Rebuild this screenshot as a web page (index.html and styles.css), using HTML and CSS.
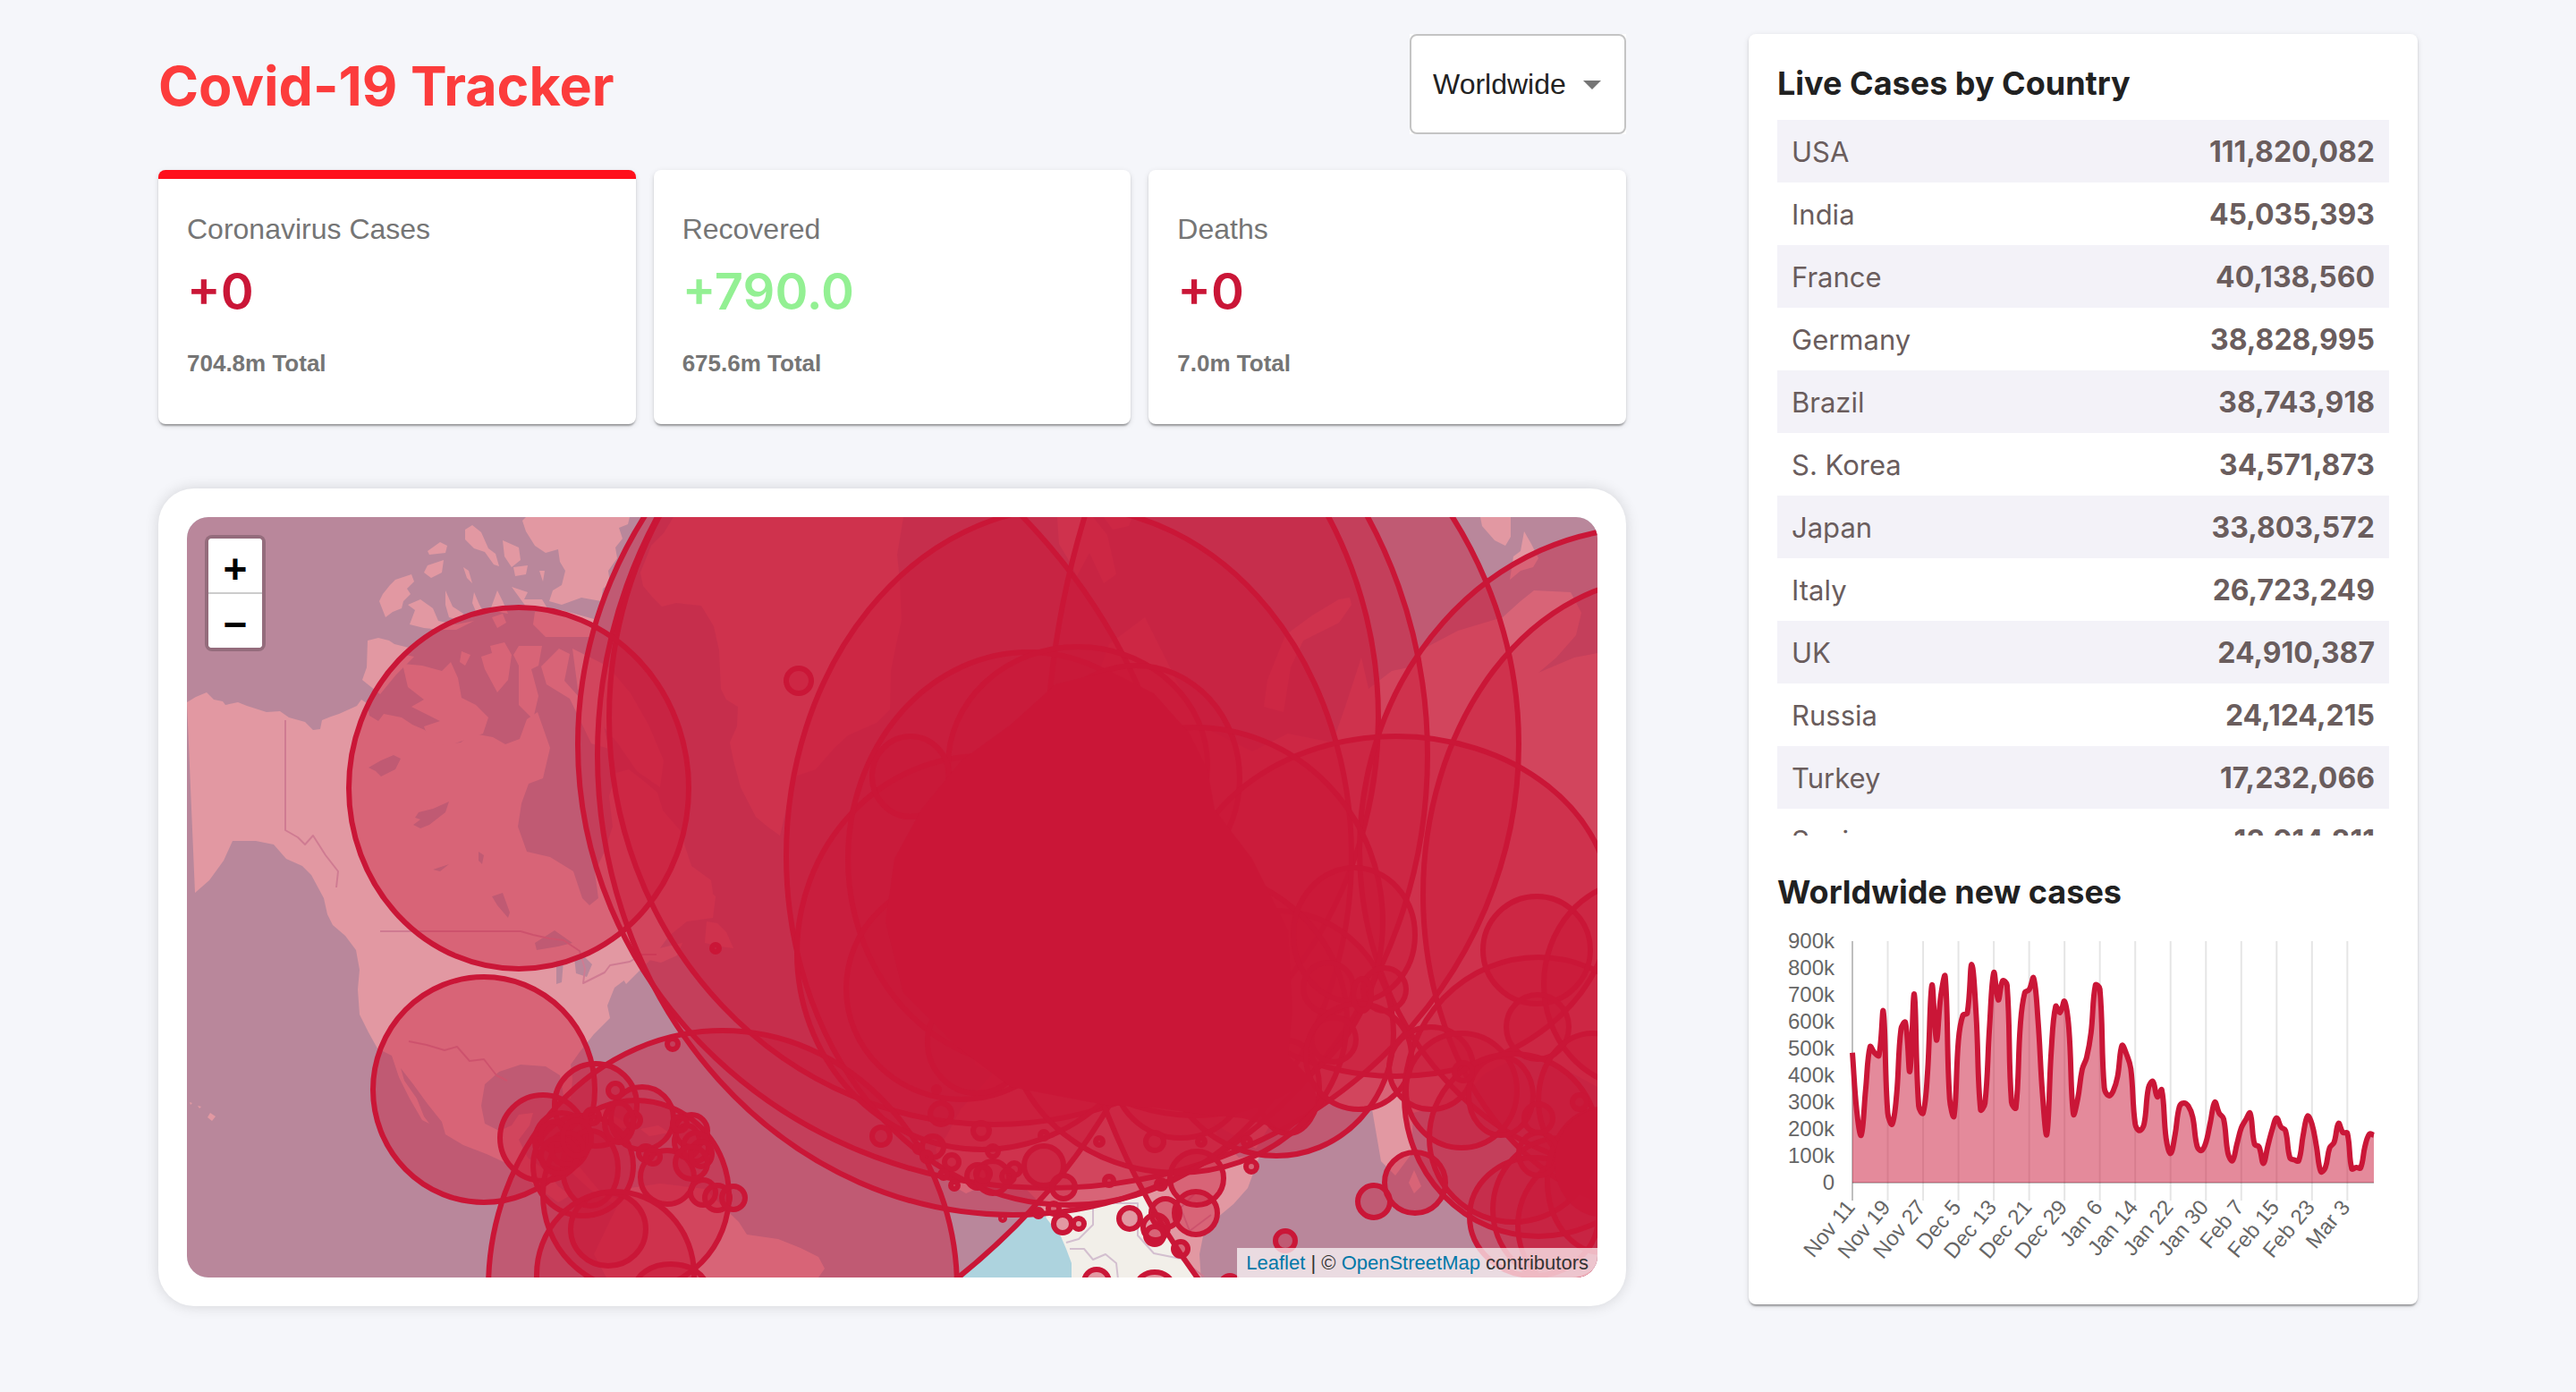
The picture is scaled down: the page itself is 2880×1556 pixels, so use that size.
FILE: index.html
```html
<!DOCTYPE html>
<html lang="en">
<head>
<meta charset="utf-8">
<meta name="viewport" content="width=device-width, initial-scale=1">
<title>Covid-19 Tracker</title>
<link rel="stylesheet" href="styles.css">
</head>
<body>
<div class="app">
  <main class="app-left">
    <header class="app-header">
      <h1 class="app-title">Covid-19 Tracker</h1>
      <div class="country-picker">
        <select class="country-select" aria-label="Country">
          <option>Worldwide</option>
          <option>USA</option>
          <option>India</option>
          <option>France</option>
        </select>
        <svg class="country-arrow" viewBox="0 0 20 10" aria-hidden="true"><path d="M0 0h20L10 10z"/></svg>
      </div>
    </header>

    <section class="stats">
      <article class="card stat stat-selected">
        <p class="stat-title">Coronavirus Cases</p>
        <h2 class="stat-cases">+0</h2>
        <p class="stat-total">704.8m Total</p>
      </article>
      <article class="card stat">
        <p class="stat-title">Recovered</p>
        <h2 class="stat-cases stat-green">+790.0</h2>
        <p class="stat-total">675.6m Total</p>
      </article>
      <article class="card stat">
        <p class="stat-title">Deaths</p>
        <h2 class="stat-cases">+0</h2>
        <p class="stat-total">7.0m Total</p>
      </article>
    </section>

    <section class="map-card">
      <div class="map">
        <svg class="map-canvas" viewBox="209 578 1577 850" preserveAspectRatio="xMidYMid slice" role="img" aria-label="World map of cases">
          <rect class="ocean" x="209" y="578" width="1577" height="850"/>
          <g class="land">
            <!-- North America -->
            <path d="M209 785l10-6 12-5 8 8 10 2 3 4 14-3 10 4 22 7 15-1 10 7 18 5 9 9 8-1 2-10 10-4 9-3 20-9 5-7 6 4 3 14 10 6 6-8 20 4 12 8 14 6 10 12 10 4 20-2 14-10 22 4 14 8 16-6 8-22 12-8 14 40-8 34-16 6-8 22-4 26 10 28 26 6 26 16 10 30 8 8 10-8-4-30 10-20 10-30-4-34 8-26 14-4 18 14 14 12 8 26 20 26 10 30 22 16 2 14-10 16-30 4-18 18-12 16 10 8 26-6-6 14-18 8-18-4-18 20-16 12-8 20 3 14-18 18-16 20-10 14 2 16-2 22-8-4-4-22-16-10-28-2-24 8-16 14-4 24 4 20 16 8 14-6 8-12 16-2-4 14-12 16 10 20 20 14 14 18 14 10-14 8-30-22-24-20-26-12-26-10-20-12-4-14-16-20-16-22-14-18 4 14 14 20 8 20 6 8-8-4-14-24-12-24-8-24-16-8-10-18-10-20-2-28 2-22-4-22-12-16-14-12-6-12-4-18-14-26-10-10-18-8-14-16-20-4-26 0-10 22-16 22-16 14z"/>
            <path d="M684 905L700 885 722 890 740 905 762 930 772 978 800 1002 797 1026 768 1030 748 1046 732 1068 700 1100 676 1060 674 1010 690 960z"/>
            <path d="M640 725L680 745 705 775 725 810 742 850 738 880 712 862 690 830 664 800 646 770z"/>
            <path d="M790 1030l12 2 10 10 8 18-14-2-18-4z"/>
            <!-- Arctic islands -->
            <path d="M411 716l12-3 12 3 6 4 16 4-4 8 10 2-20 20-18 22-20-16 5-14z"/>
            <path d="M424 672l4-8 8-10 6-6 12-4 6-2 3 8-8 8 4 6-8 8-2 8-10 4-8 6z"/>
            <path d="M478 616l14-10 8 4-2 8-18 2zM478 632l18-6-2 14-12 6-8-6zM520 592l8-5 10 8 8 18 8 6 4 14-6-2-10-14-12-4-10-10zM562 604l18 8 2 14-10 8-8-12zM574 634l16-2-2 10-12 2zM518 634l6 4 4 14-6-6zM603 638l6 0-2 12z"/>
            <path d="M576 578h128l-2 8-10 4 4 12-8 10 2 12-10 14 2 14-8 6-2 14-22-4-22 8-14-4 4-12 10-6 4-16-6-10-2-14-14 4-12-8-10-16-4-12 6-6z"/>
            <path d="M572 656l18 6-4 8 20 0 6 10-24-2zM556 660l6 12 6 14-20-4zM530 662l6 14 6 10-8 2-6-14zM498 660l8 18 12 8-2 8-14-4-4-14zM456 676l14-6 14 10 6 14 20 4 20-4-20 10-16 0-20-2-16-4 6-16z"/>
            <path d="M450 742l22 2 22 6 10-10 8 18 4 22 16 8 14 14-6 18-40 14-20-6-6-16 18-6-32-16 14-8-18-14zM516 728l10 4-6 12-6-4zM548 722l16-4 8 14-4 28-12 14-14-26-4-14 12-4zM580 722h26l-4 22-8 4 8 30-6 26-16-16 0-44-6-12zM550 690l12-4 4 10-10 6zM598 684l30-2 36 10-4 20-50 0-14-14zM625 725l12 6-6 30 18 20 14-8 10 30 8 34-20-6-24-50-26-16-6-20z"/>
            <!-- Greenland -->
            <path d="M753 578L742 596 728 610 716 640 719 655 730 668 740 678 756 674 784 677 798 700 804 727 806 770 812 782 825 790 824 812 816 830 820 850 828 880 845 913 858 924 872 934 880 900 891 867 912 860 932 837 948 822 980 808 995 793 996 750 1002 720 1008 693 1006 650 1003 620 1010 578z"/>
            <!-- South America -->
            <path d="M640 1295l30 36 22 10 6-12 40-6 50 6 38 37 9 14 35 5 25 10 20 10 7 13-7 10H678l-14-26 26-54-30-18-26-24z"/>
            <path d="M648 1248l26-8 24 14 10 8-20-2zM716 1262l20-4 12 8-22 4z"/>
            <!-- Africa -->
            <path d="M1110 1200l-36 40-16 30-12 14 6 24 14 18 14 8 18-8 32 0 16 2 12 12 8 12 4 10 16 20 6 14 6 16v20h145l-2-30 4-20 10-16 24-20 16-18 14-38-24 4-24-24-20-70z"/>
            <!-- Europe and Asia -->
            <path d="M1090 1190L1100 1100 1160 940 1240 720 1280 690 1340 810 1400 840 1440 820 1490 830 1504 790 1522 735 1530 770 1556 750 1580 745 1592 725 1630 705 1680 690 1700 672 1715 660 1756 662 1768 685 1762 710 1740 735 1720 752 1760 735 1786 730V1215L1740 1190 1700 1180 1660 1200 1632 1230 1580 1244 1578 1290 1560 1314 1544 1298 1534 1240 1494 1234 1454 1214 1434 1234 1404 1284 1304 1224 1264 1184 1164 1224z"/>
            <path d="M1413 790l4-30 20-50 30-22 30-18 12-2 2 8-14 20-40 20-14 30-8 50z"/>
            <path d="M1182 578h40l16 20 10 44-14 10-16-34-14 26-8-16-12-20zM1234 578h32l-4 10-18 4z"/>
            <path d="M1655 578h34v22l-6 10-12-6-14-16zM1704 594l8 14 8 16-6 10-14 4-12 10 4-26 8-6zM1575 1322l6-14 8 18-8 8z"/>
            <path d="M235 1244l6 4-4 5-5-4zM212 1232l3 1-2 2zM221 1236l4 1-2 2z"/>
          </g>
          <g class="water">
            <path d="M412 858l14-8 14-6 8 4-6 12-16 8-6-6zM464 914l4-6 16-4 18-8-4 12-18 14-10 4-8-4 8-6zM598 1054l22-14 20 14-16 4-24 4zM622 1074l8 0-2 24-6 2zM642 1070l12 0 8 8-6 14-12-4zM550 1002l12-4 8 22-2 6-12-14zM484 972l18-6-10 8zM535 952l6 4-2 10-4-4z"/>
          </g>
          <g class="border">
            <path d="M319 805V928l14 8 8 8 9-10 14 22 14 18-2 18M425 1041H582l14 4 18 4 16 2 18 12 6 20-2 16 24-12 6-8 22-4 14-8h16M457 1164l20 4 20 6 14-4 14 16 16-2 14 18 12 6"/>
            <path d="M1222 1345v24l-16 16-14 4M1196 1396h16l10 12 14-6 12 10 2 18M1222 1345h50v36l18 20 30 6 26 20M1340 1330l-20 20 10 26 24-18"/>
          </g>
          <g class="outbreaks" id="outbreaks"></g>
        </svg>
        <div class="zoom-control">
          <button class="zoom-button zoom-in" type="button" aria-label="Zoom in">+</button>
          <button class="zoom-button" type="button" aria-label="Zoom out">−</button>
        </div>
        <div class="attribution"><a href="#leaflet">Leaflet</a> | © <a href="#osm">OpenStreetMap</a> contributors</div>
      </div>
    </section>
  </main>

  <aside class="card app-right">
    <h3 class="side-title">Live Cases by Country</h3>
    <div class="table-scroll">
      <table class="country-table">
        <tbody>
          <tr><td>USA</td><td>111,820,082</td></tr>
          <tr><td>India</td><td>45,035,393</td></tr>
          <tr><td>France</td><td>40,138,560</td></tr>
          <tr><td>Germany</td><td>38,828,995</td></tr>
          <tr><td>Brazil</td><td>38,743,918</td></tr>
          <tr><td>S. Korea</td><td>34,571,873</td></tr>
          <tr><td>Japan</td><td>33,803,572</td></tr>
          <tr><td>Italy</td><td>26,723,249</td></tr>
          <tr><td>UK</td><td>24,910,387</td></tr>
          <tr><td>Russia</td><td>24,124,215</td></tr>
          <tr><td>Turkey</td><td>17,232,066</td></tr>
          <tr><td>Spain</td><td>13,914,811</td></tr>
        </tbody>
      </table>
    </div>
    <h3 class="side-title chart-title">Worldwide new cases</h3>
    <svg class="chart" id="chart" viewBox="0 0 684 370" role="img" aria-label="Worldwide new cases per day"></svg>
  </aside>
</div>
<script src="app.js"></script>
</body>
</html>
```
FILE: styles.css
```css
* {
  box-sizing: border-box;
  margin: 0;
}

body {
  background: #f5f6fa;
  color: #212121;
  font-family: Inter, sans-serif;
}

.app {
  display: grid;
  grid-template-columns: minmax(0, 1641fr) minmax(0, 748fr);
  align-items: start;
  gap: 137px;
  padding: 38px 177px;
}

.card {
  background: #fff;
  border-radius: 8px;
  box-shadow: 0 4px 2px -2px rgba(0, 0, 0, 0.2), 0 2px 2px rgba(0, 0, 0, 0.14), 0 2px 6px rgba(0, 0, 0, 0.12);
}

/* Header */

.app-header {
  display: flex;
  align-items: center;
  justify-content: space-between;
  margin-bottom: 40px;
}

.app-title {
  padding-top: 4px;
  color: #fc3c3c;
  font-size: 61px;
  font-weight: 700;
  line-height: 80px;
}

.country-picker {
  position: relative;
  background: #fff;
}

.country-select {
  display: block;
  width: 242px;
  height: 112px;
  padding: 0 60px 0 24px;
  appearance: none;
  background: transparent;
  border: 2px solid #c4c4c4;
  border-radius: 8px;
  color: #212121;
  font-family: "Liberation Sans", sans-serif;
  font-size: 32px;
}

.country-arrow {
  position: absolute;
  top: 52px;
  right: 28px;
  width: 20px;
  height: 10px;
  fill: #757575;
  pointer-events: none;
}

/* Stat cards */

.stats {
  display: grid;
  grid-template-columns: repeat(3, minmax(0, 1fr));
  gap: 20px;
  margin-bottom: 72px;
}

.stat {
  padding: 32px 32px 48px;
  border-top: 10px solid transparent;
}

.stat-selected {
  border-top-color: #ff0f1b;
}

.stat-title {
  color: #757575;
  font-family: "Liberation Sans", sans-serif;
  font-size: 32px;
  line-height: 48px;
}

.stat-cases {
  margin-top: 16px;
  color: #ca1637;
  font-size: 56px;
  font-weight: 600;
  line-height: 60px;
}

.stat-green {
  color: #93f093;
}

.stat-total {
  margin-top: 30px;
  color: #757575;
  font-family: "Liberation Sans", sans-serif;
  font-size: 26px;
  font-weight: 700;
  line-height: 40px;
}

/* Map */

.map-card {
  padding: 32px;
  background: #fff;
  border-radius: 40px;
  box-shadow: 0 0 16px rgba(0, 0, 0, 0.14);
}

.map {
  position: relative;
  overflow: hidden;
  border-radius: 24px;
}

.map-canvas {
  display: block;
  width: 100%;
  aspect-ratio: 1577 / 850;
}

.ocean,
.water {
  fill: #add3de;
}

.land {
  fill: #f2efe9;
}

.border {
  fill: none;
  stroke: #d3bfcf;
  stroke-width: 2;
  stroke-linejoin: round;
}

.outbreaks {
  fill: #ca1637;
  fill-opacity: 0.4;
  stroke: #ca1637;
  stroke-width: 6;
}

.dense {
  fill-opacity: 0.9;
  stroke: none;
}

.zoom-control {
  position: absolute;
  top: 20px;
  left: 20px;
  overflow: hidden;
  width: 68px;
  background: #fff;
  background-clip: padding-box;
  border: 4px solid rgba(0, 0, 0, 0.2);
  border-radius: 8px;
}

.zoom-button {
  display: block;
  width: 60px;
  height: 60px;
  padding: 4px 0 0;
  background: #fff;
  border: 0;
  color: #000;
  font-family: "Liberation Sans", sans-serif;
  font-size: 46px;
  font-weight: 700;
  line-height: 60px;
}

.zoom-in {
  height: 62px;
  border-bottom: 2px solid #ccc;
}

.attribution {
  position: absolute;
  right: 0;
  bottom: 0;
  padding: 0 10px;
  background: rgba(255, 255, 255, 0.7);
  color: #333;
  font-family: "Liberation Sans", sans-serif;
  font-size: 22px;
  line-height: 33px;
}

.attribution a {
  color: #0078a8;
  text-decoration: none;
}

/* Side panel */

.app-right {
  padding: 32px 32px 48px;
}

.side-title {
  font-size: 36px;
  font-weight: 700;
  line-height: 46px;
}

.table-scroll {
  height: 800px;
  margin-top: 18px;
  overflow-y: auto;
  scrollbar-width: none;
}

.country-table {
  width: 100%;
  border-collapse: collapse;
  color: #6a5d5d;
  font-size: 31px;
}

.country-table tr:nth-child(odd) {
  background: #f3f2f8;
}

.country-table td {
  height: 70px;
  padding: 0 16px;
}

.country-table td:last-child {
  font-size: 32px;
  font-weight: 700;
  text-align: right;
}

.chart-title {
  margin-top: 40px;
}

.chart {
  display: block;
  width: 100%;
  margin-top: 20px;
}

.chart-label {
  fill: #666;
  font-family: "Liberation Sans", sans-serif;
  font-size: 24px;
  text-anchor: end;
}

.chart-grid {
  stroke: rgba(0, 0, 0, 0.1);
  stroke-width: 2;
}

.chart-axis {
  stroke: rgba(0, 0, 0, 0.25);
  stroke-width: 2;
}

.chart-area {
  fill: #ca1637;
  fill-opacity: 0.5;
}

.chart-line {
  fill: none;
  stroke: #ca1637;
  stroke-width: 6;
  stroke-linejoin: round;
}
```
FILE: app.js
```js
const SVG = "http://www.w3.org/2000/svg";

function add(parent, name, attrs, text) {
  const node = document.createElementNS(SVG, name);
  for (const key in attrs) node.setAttribute(key, attrs[key]);
  if (text) node.textContent = text;
  parent.appendChild(node);
}

// Outbreak markers: centre x, centre y, radius x, radius y.
const outbreaks = [
  [1172, 832, 526, 496], [1132, 844, 464, 514],
  [1111, 802, 430, 455], [1195, 957, 316, 390], [315, 970, 1000, 700], [1769, 875, 600, 794],
  [580, 881, 190, 202], [541, 1218, 124, 126],
  [808, 1440, 262, 288], [1098, 1065, 207, 220], [1150, 960, 202, 231], [1205, 855, 145, 132],
  [1270, 870, 116, 126], [1840, 950, 320, 360], [1860, 1000, 269, 354], [1561, 1013, 240, 190],
  [1720, 1226, 150, 156], [1427, 1155, 131, 137], [1335, 1030, 211, 217], [1075, 1105, 129, 124],
  [1092, 1165, 55, 57], [1320, 1200, 75, 72], [1440, 1215, 35, 52], [1316, 1140, 190, 171],
  [1018, 868, 43, 45], [1718, 1062, 60, 60], [1830, 1100, 104, 115], [1719, 1148, 35, 36],
  [1514, 1045, 68, 75], [1485, 1104, 28, 28], [1491, 1162, 25, 25], [1548, 1106, 24, 24],
  [1519, 1181, 59, 59], [1600, 1194, 47, 46], [1634, 1219, 62, 64], [1678, 1225, 36, 44],
  [1692, 1272, 94, 94], [1582, 1322, 34, 34], [1536, 1343, 18, 18], [1437, 1387, 11, 11],
  [1399, 1304, 6, 6], [1291, 1276, 10, 10], [1338, 1317, 30, 30], [1337, 1356, 24, 24],
  [1303, 1356, 16, 16], [1292, 1372, 14, 14], [1291, 1381, 10, 10], [1263, 1362, 12, 12],
  [1320, 1396, 8, 8], [1291, 1438, 20, 16], [1226, 1433, 14, 14], [1375, 1436, 10, 10],
  [1715, 1360, 72, 66], [1745, 1352, 76, 80], [1775, 1370, 78, 80], [1780, 1230, 60, 75],
  [1790, 1320, 60, 80], [1720, 1290, 22, 24], [1720, 1250, 16, 16], [1766, 1232, 8, 8],
  [1636, 1198, 10, 10], [1523, 1112, 10, 18],
  [666, 1235, 46, 46], [607, 1272, 48, 48], [628, 1276, 30, 32], [652, 1303, 56, 56],
  [660, 1306, 31, 42], [718, 1250, 35, 35], [711, 1336, 104, 106], [746, 1316, 30, 30],
  [680, 1374, 42, 41], [688, 1425, 88, 93], [750, 1440, 40, 27], [786, 1333, 14, 14],
  [802, 1339, 14, 14], [820, 1339, 13, 13], [773, 1264, 18, 18], [768, 1276, 14, 18],
  [778, 1282, 14, 16], [784, 1290, 12, 14], [773, 1300, 18, 18], [760, 1256, 8, 8],
  [688, 1219, 8, 8], [708, 1252, 8, 8], [662, 1248, 8, 8], [722, 1289, 8, 8],
  [730, 1293, 8, 8], [620, 1270, 16, 16], [634, 1284, 18, 18], [625, 1292, 20, 20],
  [645, 1272, 16, 20], [692, 1255, 16, 22], [800, 1060, 4, 4],
  [752, 1167, 6, 6], [985, 1270, 10, 10], [893, 761, 14, 14], [1052, 1245, 12, 12],
  [1097, 1264, 9, 9], [1047, 1218, 3, 3], [1043, 1282, 12, 12], [1027, 1284, 4, 4],
  [1036, 1293, 5, 5], [1064, 1299, 8, 8], [1055, 1313, 4, 4], [1067, 1325, 4, 4],
  [1093, 1315, 12, 13], [1110, 1316, 18, 18], [1099, 1312, 8, 8], [1110, 1287, 6, 6],
  [1134, 1307, 7, 7], [1127, 1315, 7, 7], [1167, 1303, 22, 22], [1167, 1269, 4, 4],
  [1229, 1276, 4, 4], [1189, 1327, 13, 13], [1178, 1351, 6, 6], [1188, 1368, 10, 10],
  [1206, 1368, 6, 6], [1121, 1362, 2, 2], [1161, 1356, 4, 4], [1240, 1320, 5, 5],
  [1343, 1276, 4, 4], [1298, 1324, 5, 5], [1394, 1276, 4, 4]
];

const markers = document.getElementById("outbreaks");
for (const [cx, cy, rx, ry] of outbreaks) add(markers, "ellipse", { cx, cy, rx, ry });

// Overlapping small European and Middle Eastern markers merge into one field.
add(markers, "path", {
  class: "dense",
  d: "M1000 960L1030 905 1075 850 1130 810 1180 765 1240 750 1290 775 1330 820 1350 860 1358 905 1400 960 1440 1040 1445 1130 1440 1180 1470 1210 1472 1235 1440 1265 1390 1250 1340 1245 1290 1238 1235 1235 1130 1215 1070 1170 1010 1110 990 1030z"
});
add(markers, "ellipse", { class: "dense", cx: 1790, cy: 1300, rx: 52, ry: 60 });

// New cases per day, in thousands, from Nov 11.
const cases = [
  484, 265, 177, 347, 507, 484, 474, 638, 259, 218, 327, 572, 597, 415, 702, 286, 259, 409, 736, 531,
  695, 768, 313, 248, 531, 624, 632, 813, 627, 272, 296, 572, 783, 681, 752, 736, 300, 279, 586, 708,
  719, 763, 606, 334, 180, 490, 657, 634, 676, 572, 256, 313, 422, 466, 559, 736, 722, 354, 324, 341,
  395, 511, 480, 425, 218, 194, 218, 354, 377, 320, 346, 164, 109, 177, 283, 297, 286, 245, 136, 120,
  150, 225, 300, 259, 238, 109, 82, 143, 204, 234, 259, 143, 134, 72, 136, 198, 241, 207, 194, 93,
  85, 82, 177, 248, 218, 136, 41, 55, 130, 150, 221, 187, 184, 52, 57, 55, 136, 181, 177
];
const dates = ["Nov 11", "Nov 19", "Nov 27", "Dec 5", "Dec 13", "Dec 21", "Dec 29", "Jan 6",
  "Jan 14", "Jan 22", "Jan 30", "Feb 7", "Feb 15", "Feb 23", "Mar 3"];

const chart = document.getElementById("chart");
const left = 84, right = 667, top_ = 12, bottom = 282;
const step = (right - left) / (cases.length - 1);
const px = i => left + i * step;
const py = v => bottom - (v / 900) * (bottom - top_);

dates.forEach((date, i) => {
  const x = px(i * 8);
  add(chart, "line", { class: i ? "chart-grid" : "chart-axis", x1: x, x2: x, y1: top_, y2: bottom + 20 });
  add(chart, "text", { class: "chart-label", transform: `translate(${x - 2} 305) rotate(-50)`, dy: 8 }, date);
});
for (let v = 0; v <= 900; v += 100) {
  add(chart, "text", { class: "chart-label", x: 64, y: py(v) + 8 }, v ? v + "k" : "0");
}
add(chart, "line", { class: "chart-axis", x1: left, x2: right, y1: bottom, y2: bottom });

// Spline through the points, with control points scaled by neighbour distance.
const pts = cases.map((v, i) => [px(i), py(v)]);
const clamp = y => Math.min(bottom, Math.max(top_, y));
const controls = pts.map((p, i) => {
  const a = pts[i - 1] || p, b = pts[i + 1] || p;
  const d1 = Math.hypot(p[0] - a[0], p[1] - a[1]), d2 = Math.hypot(b[0] - p[0], b[1] - p[1]);
  const k1 = 0.4 * d1 / (d1 + d2), k2 = 0.4 * d2 / (d1 + d2);
  return [
    [p[0] - k1 * (b[0] - a[0]), clamp(p[1] - k1 * (b[1] - a[1]))],
    [p[0] + k2 * (b[0] - a[0]), clamp(p[1] + k2 * (b[1] - a[1]))]
  ];
});
let line = `M${pts[0]}`;
for (let i = 1; i < pts.length; i++) line += `C${controls[i - 1][1]} ${controls[i][0]} ${pts[i]}`;
add(chart, "path", { class: "chart-area", d: `${line}V${bottom}H${left}z` });
add(chart, "path", { class: "chart-line", d: line });
```
